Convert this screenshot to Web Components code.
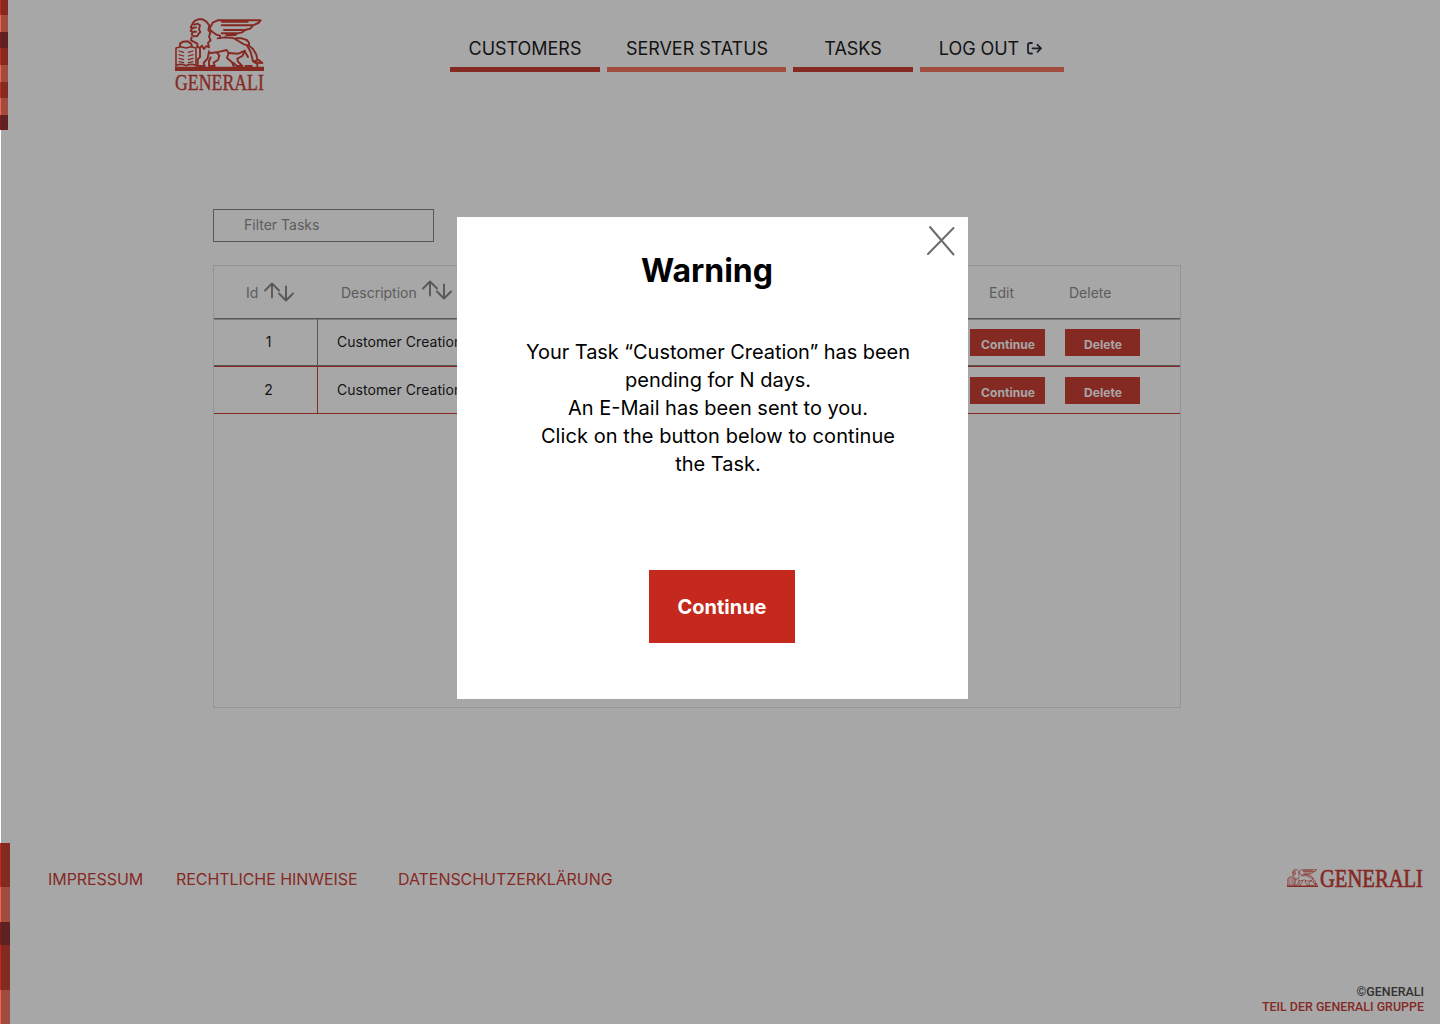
<!DOCTYPE html>
<html lang="en">
<head>
<meta charset="utf-8">
<title>Tasks</title>
<style>
body{margin:0;background:#fff;font-family:Inter,sans-serif;color:#000}
</style>
</head>
<body>
<task-page></task-page>
<script>
const define = (name, html) => {
  const t = document.createElement('template');
  t.innerHTML = html;
  customElements.define(name, class extends HTMLElement {
    constructor() {
      super();
      this.attachShadow({mode: 'open'}).append(t.content.cloneNode(true));
    }
  });
};

define('lion-mark', `
<style>:host{display:block}svg{display:block;width:100%;height:100%}</style>
<svg viewBox="30 22 267 159" preserveAspectRatio="none" fill="none" stroke="#c5281c" stroke-width="5.8" stroke-linecap="round" stroke-linejoin="round">
<path d="M30 168H297V181H30Z" fill="#c5281c" stroke="none"/>
<path d="M33 167V112L48 108L63 112L78 108L93 112V167M33 164Q50 158 63 165Q78 158 93 164" stroke-width="4.8"/>
<path d="M42 121L56 125M42 132L56 136M42 143L56 147M42 153L56 156M70 125L84 121M70 136L84 132M70 147L84 143M70 156L84 153" stroke-width="3.8"/>
<path d="M45 106V99L54 93L68 92L77 98L81 105"/>
<path d="M97 108L104 112L111 105L117 115L124 106L132 110L129 96L137 89L132 78L136 66L130 58L133 44L124 33L113 26L100 26L90 30L84 37L77 50L81 54L77 61L83 64L80 71L86 77L97 76L101 69L106 64L102 56L105 44L98 39L88 42"/>
<path d="M82 52L93 50M84 63L93 63M80 80L78 89L97 99V108"/>
<path d="M105 113V139L98 146V166H119L116 157L128 143L132 122"/>
<path d="M134 54L143 36L158 29H287L280 37L264 44H170M171 33H248M264 44L256 54L240 58H177M240 58L232 65L217 68H170M217 68L211 73H184M135 56L140 62L154 72L165 75V83"/>
<path d="M158 83L178 80L205 82L220 91L237 101L252 105V96L245 88L230 83H213M252 105L264 115L274 132L277 149M268 151L281 148L292 157L279 156Z"/>
<path d="M247 106L257 124L261 140L264 152L277 160V167M241 166H260M239 122L249 139"/>
<path d="M132 128L155 125L185 118L191 127L186 142L201 155L206 166M156 126L163 135L159 148L146 156L149 166H132V151L137 140"/>
<path d="M191 127L220 129L240 120L232 136L217 144L219 153L232 166H215L206 157"/>
</svg>`);

define('brand-logo', `
<style>
:host{display:block;width:90px;height:75px;color:#c5281c}
lion-mark{width:89px;height:53px}
svg{display:block;margin-top:-5px;overflow:visible}
text{font-family:"Liberation Serif",serif;fill:#c5281c;stroke:#c5281c;stroke-width:.4}
</style>
<lion-mark></lion-mark>
<svg width="94" height="34"><text transform="translate(0 23.6) scale(.791 1)" font-size="22.5">GENERALI</text></svg>`);

define('brand-line', `
<style>
:host{display:flex;width:137px;height:20px;gap:2px}
lion-mark{flex:none;width:31px;height:18px}
svg{display:block;flex:none;margin-top:-9px;overflow:visible}
text{font-family:"Liberation Serif",serif;fill:#c5281c;stroke:#c5281c;stroke-width:.7}
</style>
<lion-mark></lion-mark>
<svg width="106" height="40"><text transform="translate(0 27) scale(.808 1)" font-size="25.5">GENERALI</text></svg>`);

customElements.define('colour-stripe', class extends HTMLElement {
  connectedCallback() {
    const tones = {r: '#c5281c', o: '#f3654e', d: '#831a1c'};
    const root = this.attachShadow({mode: 'open'});
    root.innerHTML = '<style>:host{display:flex;flex-direction:column}</style>';
    for (const part of this.getAttribute('parts').split(' ')) {
      const d = document.createElement('div');
      d.style.cssText = `height:${part.slice(1)}px;background:${tones[part[0]]}`;
      root.append(d);
    }
  }
});

define('nav-item', `
<style>
:host{display:flex;box-sizing:border-box;height:42px;border-bottom:5px solid var(--bar,#c5281c);font-size:18px;line-height:22px;padding-top:8px;justify-content:center;white-space:nowrap;letter-spacing:-.04px}
</style><slot></slot>`);

define('sort-arrows', `
<style>:host{display:block;width:30px;height:20px}svg{display:block}</style>
<svg width="30" height="20" fill="none" stroke="#777" stroke-width="1.9" stroke-linecap="round" stroke-linejoin="round"><path d="M1 8.5L8 1.5L15 8.5M8 2V15.5M15 11.5L22 18.5L29 11.5M22 18V4.5"/></svg>`);

define('small-button', `
<style>:host{display:block;box-sizing:border-box;width:75px;height:27px;background:#c5281c;color:#fff;font-weight:700;font-size:12px;line-height:15px;padding:8px 0 0 1px;text-align:center}</style><slot></slot>`);

define('task-row', `
<style>
:host{display:flex;box-sizing:border-box;height:var(--h,47px);border-bottom:1px solid var(--line,#777);font-size:14px;line-height:18px;letter-spacing:.05px}
.id{box-sizing:border-box;width:104px;padding:14px 0 0 6px;border-right:1px solid var(--line,#777);text-align:center}
.desc{flex:1;padding:14px 0 0 19px}
.acts{display:flex;gap:20px;padding:10px 40px 0 0}
</style>
<div class="id"><slot name="id"></slot></div><div class="desc"><slot></slot></div>
<div class="acts"><small-button>Continue</small-button><small-button>Delete</small-button></div>`);

define('task-table', `
<style>
:host{display:block;box-sizing:border-box;width:968px;height:443px;border:1px solid #dddee0}
.head{display:flex;height:52px;border-bottom:1px solid #777;box-shadow:0 1px #b9b9b9;color:#808080;font-size:14px;line-height:18px}
.head span{padding-top:18px}
.c1{display:flex;width:95px;padding-left:32px;gap:6px}
.c2{display:flex;flex:1;gap:5px}
.c1 sort-arrows{margin-top:16px}.c2 sort-arrows{margin-top:14px}
.e{width:80px}.d{width:111px}
</style>
<div class="head"><div class="c1"><span>Id</span><sort-arrows></sort-arrows></div><div class="c2"><span>Description</span><sort-arrows></sort-arrows></div><span class="e">Edit</span><span class="d">Delete</span></div>
<task-row><span slot="id">1</span>Customer Creation</task-row>
<task-row style="--h:48px;--line:#c5281c;border-top:1px solid #c5281c"><span slot="id">2</span>Customer Creation</task-row>`);

define('warning-dialog', `
<style>
:host{display:flex;flex-direction:column;align-items:center;box-sizing:border-box;width:511px;height:482px;background:#fff;position:relative}
svg{position:absolute;left:469px;top:8px}
h1{margin:34px 11px 0 0;font-size:32px;line-height:40px;font-weight:700}
p{margin:47px 0 0 11px;font-size:20px;line-height:28px;text-align:center;white-space:nowrap}
.a{letter-spacing:-.055px}.b{letter-spacing:.07px}
button{margin:92px 0 0 19px;width:146px;height:73px;border:0;background:#c5281c;color:#fff;font:700 20px Inter,sans-serif;padding:0}
</style>
<svg width="30" height="32" stroke="#6c6c6c" stroke-width="2" stroke-linecap="round"><path d="M4 2L27.5 29.5M27.5 3L2 29"/></svg>
<h1>Warning</h1>
<p><span class="a">Your Task “Customer Creation” has been</span><br>pending for N days.<br>An E-Mail has been sent to you.<br><span class="b">Click on the button below to continue</span><br>the Task.</p>
<button>Continue</button>`);

define('page-footer', `
<style>
:host{display:flex;box-sizing:border-box;height:181px;padding:26px 16px 10px 38px;color:#c5281c;justify-content:space-between}
nav{display:flex;font-size:16px;line-height:20px;white-space:nowrap;letter-spacing:-.06px}
.i{width:128px}.r{width:222px}
.side{display:flex;flex-direction:column;align-items:flex-end;justify-content:space-between}
.legal{text-align:right;font:500 12.45px/15px Roboto,sans-serif}
.legal b{display:block;font-weight:500;color:#333}
</style>
<nav><span class="i">IMPRESSUM</span><span class="r">RECHTLICHE HINWEISE</span><span>DATENSCHUTZERKLÄRUNG</span></nav>
<div class="side"><brand-line></brand-line><div class="legal"><b>©GENERALI</b>TEIL DER GENERALI GRUPPE</div></div>`);

define('task-page', `
<style>
:host{display:flex;position:relative;width:1440px;height:1024px;overflow:hidden;background:#fff}
.edge{display:flex;flex-direction:column;justify-content:space-between;width:10px}
.top{width:8px}
main{display:flex;flex-direction:column;flex:1}
header{display:flex;height:209px;box-sizing:border-box;padding:18px 0 0 165px}
nav{display:flex;gap:7px;padding:12px 0 0 185px}
.exit{margin:4px 0 0 8px}
.filter{box-sizing:border-box;width:221px;height:33px;border:1px solid #777;margin:0 0 23px 203px;padding:6px 0 0 30px;font-size:14px;line-height:18px;color:#808080}
task-table{margin-left:203px}
page-footer{margin-top:auto}
.veil{position:absolute;inset:0 0 0 1px;background:rgba(45,45,45,.42)}
warning-dialog{position:absolute;left:457px;top:217px}
</style>
<div class="edge"><colour-stripe class="top" parts="r15 o17 d16 r17 o17 r16 o17 d15"></colour-stripe><colour-stripe parts="r44 o35 d23 r45 o34"></colour-stripe></div>
<main>
<header><brand-logo></brand-logo>
<nav><nav-item style="width:150px">CUSTOMERS</nav-item><nav-item style="width:179px;--bar:#f3654e;padding-left:1px;">SERVER STATUS</nav-item><nav-item style="width:120px">TASKS</nav-item><nav-item style="width:144px;--bar:#f3654e;padding-right:3px">LOG OUT<svg class="exit" width="15" height="13" fill="none" stroke="#111827" stroke-width="1.8" stroke-linecap="round" stroke-linejoin="round"><path d="M5 1H3Q1 1 1 3V9.5Q1 11.5 3 11.5H5M5.5 6.3H14M10.5 2.8L14 6.3L10.5 9.8"/></svg></nav-item></nav></header>
<div class="filter">Filter Tasks</div>
<task-table></task-table>
<page-footer></page-footer>
</main>
<div class="veil"></div>
<warning-dialog></warning-dialog>`);
</script>
</body>
</html>
